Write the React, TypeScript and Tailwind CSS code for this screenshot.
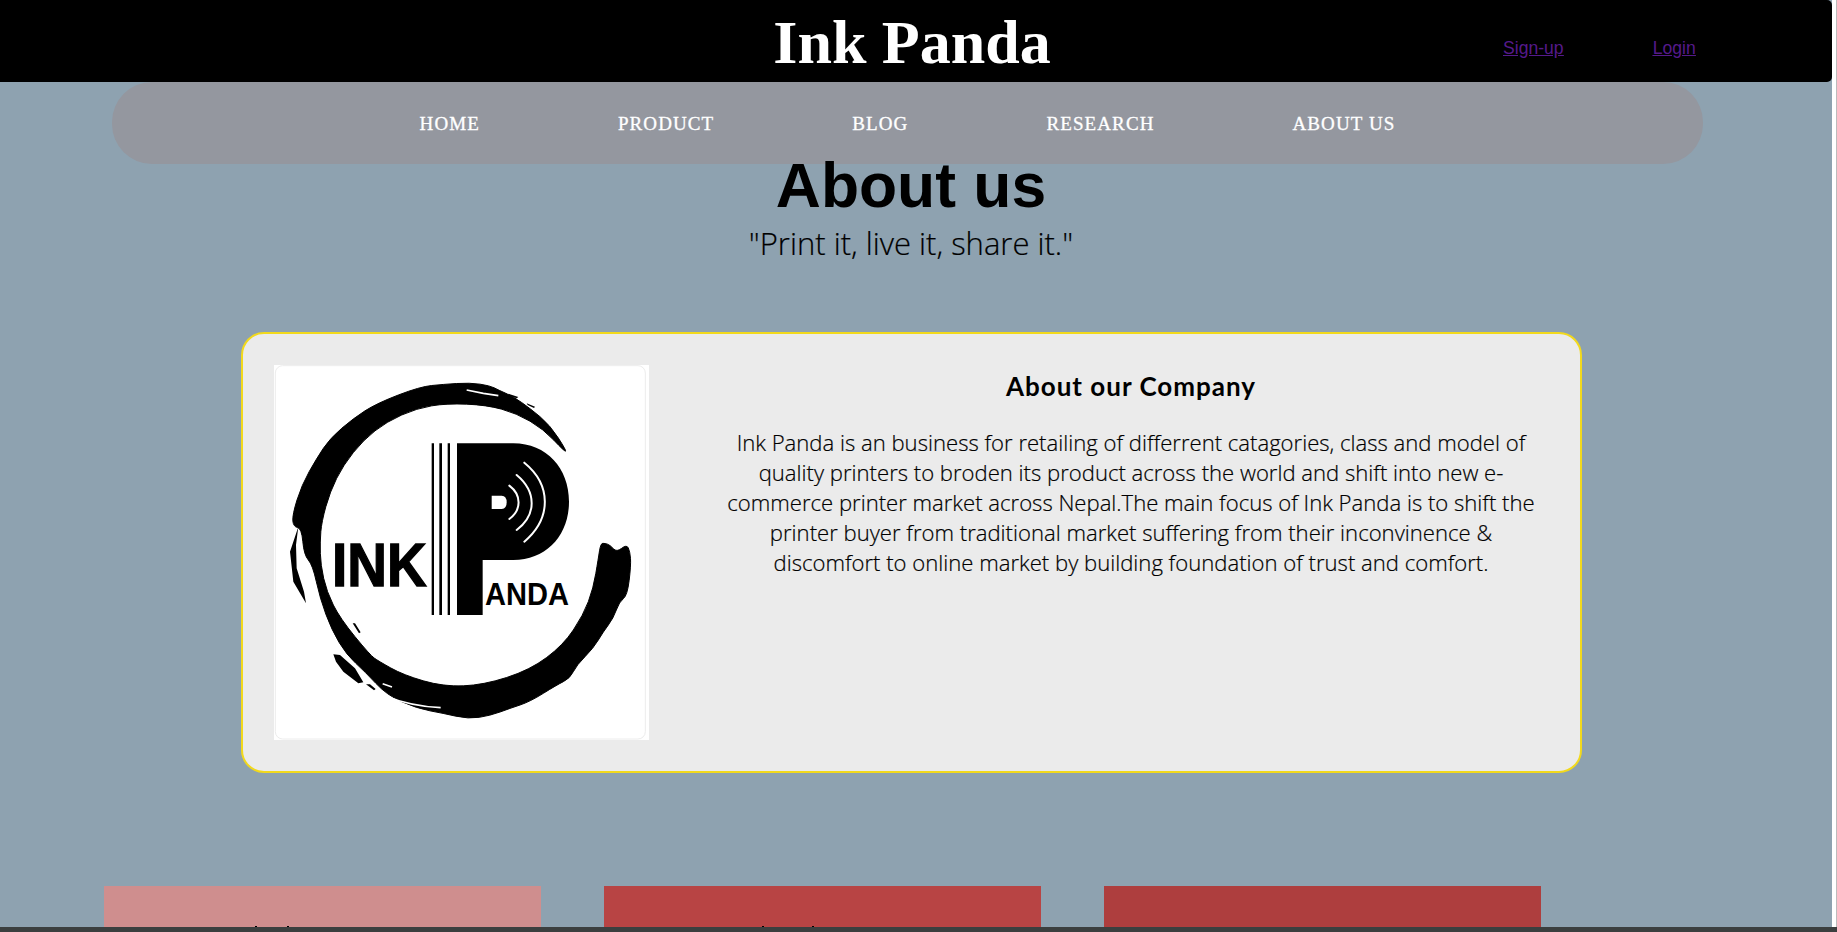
const navItems = ["HOME", "PRODUCT", "BLOG", "RESEARCH", "ABOUT US"];

// outline of the brush ring, read off the 3x crop of the logo
const ringPoints: [number, number][] = [
    [1010, 378], [1003, 379], [940, 312], [860, 265], [770, 240], [650, 235], [560, 250], [470, 290], [400, 345], [340, 420], [300, 500], [275, 590],
    [270, 650], [272, 720], [290, 800], [330, 880], [420, 990], [445, 1008], [520, 1050], [640, 1085], [760, 1080], [900, 1035], [1000, 960], [1060, 870],
    [1090, 790], [1105, 700], [1112, 655], [1125, 655], [1140, 660], [1160, 682], [1190, 658], [1200, 680], [1203, 720], [1192, 812], [1168, 830], [1150, 880], [1120, 920],
    [1090, 970], [1040, 1020], [1020, 1060], [980, 1080], [900, 1130], [840, 1150], [780, 1172], [715, 1182], [640, 1165], [560, 1150], [470, 1110], [405, 1040],
    [350, 990], [305, 915], [270, 820], [248, 720], [222, 690], [215, 610], [190, 605], [187, 570], [215, 480], [260, 400], [300, 340], [370, 280], [440, 235],
    [570, 185], [640, 178], [720, 173], [780, 182], [805, 195], [850, 215], [900, 250], [960, 300],
];

function smoothPath(points: [number, number][]): string {
    const last = points[points.length - 1];
    let d = `M${(last[0] + points[0][0]) / 2} ${(last[1] + points[0][1]) / 2}`;
    points.forEach((point, index) => {
        const next = points[(index + 1) % points.length];
        d += ` Q${point[0]} ${point[1]} ${(point[0] + next[0]) / 2} ${(point[1] + next[1]) / 2}`;
    });
    return d + " Z";
}

function Logo() {
    return (
        <svg viewBox="132 120 1125 1125" className="block w-[375px] h-[375px]">
            <rect x="132" y="120" width="1125" height="1125" fill="#ffffff" />
            <rect x="136" y="122" width="1110" height="1120" rx="22" fill="none" stroke="#ececec" strokeWidth="3" />
            <path fill="#000" stroke="#000" strokeWidth="3" d={smoothPath(ringPoints)} />
            {/* stray brush flecks */}
            <path fill="#000" d="M205 605 L180 680 L190 770 L228 835 L222 800 L200 730 L198 660 Z" />
            <path fill="#000" d="M835 206 L865 216 L860 220 L838 212 Z M890 235 L915 245 L912 249 L893 240 Z" />
            <path fill="#000" d="M368 895 L375 895 L392 922 L387 925 Z M310 988 L330 990 L375 1030 L400 1072 L385 1075 L340 1040 L318 1010 Z M408 1078 L420 1078 L437 1092 L432 1096 Z" />
            <path fill="none" stroke="#fff" strokeWidth="5" d="M710 195 L760 205 L805 212 M465 1112 C520 1135 580 1145 632 1148 M458 1076 L486 1086" />
            {/* P mark */}
            <path fill="#000" d="M605 355 H612 V870 H605 Z M628 355 H636 V870 H628 Z M653 355 H660 V870 H653 Z" />
            <path fill="#000" d="M681 355 H850 C950 355 1017 430 1017 530 C1017 630 950 705 850 705 H758 V870 H681 Z" />
            <path fill="#fff" d="M785 512 H815 Q830 512 830 532 Q830 552 815 552 H785 Z" />
            <path fill="none" stroke="#fff" strokeWidth="6" strokeLinecap="round" d="M838 482 C875 510 875 555 838 582 M860 450 C920 500 920 570 860 615 M883 413 C965 480 965 580 883 650" />
            <text x="306" y="784" fontFamily="'Liberation Sans', sans-serif" fontWeight="700" fontSize="185" textLength="284" lengthAdjust="spacingAndGlyphs" fill="#000" stroke="#000" strokeWidth="4">INK</text>
            <text x="765" y="839" fontFamily="'Liberation Sans', sans-serif" fontWeight="700" fontSize="93" textLength="252" lengthAdjust="spacingAndGlyphs" fill="#000">ANDA</text>
        </svg>
    );
}

export default function App() {
    return (
        <div className="h-[932px] overflow-hidden bg-[#8ea2b0] relative font-['Liberation_Sans',sans-serif]">
            <header className="h-[82px] mr-[5px] bg-black rounded-r-[5px] relative">
                <h1 className="pr-[8px] pt-[1px] text-center text-[62px] leading-[82px] font-bold text-white font-['Liberation_Serif',serif]">Ink Panda</h1>
                <div className="absolute left-[1503px] top-[38px] flex gap-[89px] text-[17.6px] leading-[20px] text-[#551a8b] underline">
                    <a href="#">Sign-up</a>
                    <a href="#">Login</a>
                </div>
            </header>

            <nav className="ml-[112px] w-[1591px] h-[82px] rounded-[40px] bg-[#94979f] flex items-center justify-center gap-[138px] pt-[2px] font-['Liberation_Serif',serif] text-[19px] tracking-[1.1px] [-webkit-text-stroke:0.3px_white] text-white">
                {navItems.map((item) => (
                    <span key={item}>{item}</span>
                ))}
            </nav>

            <section className="pr-[15px] text-center">
                <h2 className="text-[62.4px] leading-[73px] font-bold text-black -mt-[15px]">About us</h2>
                <p className="text-[31px] leading-[40px] text-black font-['Open_Sans',sans-serif] font-light pt-[1px] h-[40px] [-webkit-text-stroke:0.2px_black]">"Print it, live it, share it."</p>
            </section>

            <div className="ml-[241px] mt-[70px] w-[1341px] h-[441px] border-2 border-[#f2d91c] rounded-[23px] bg-[#ebebeb] flex pl-[31px] pt-[31px]">
                <div className="w-[375px] shrink-0">
                    <Logo />
                </div>
                <div className="ml-[72px] w-[820px] text-center text-black">
                    <h3 className="text-[26px] leading-[30px] font-bold tracking-[1px] font-['Lato',sans-serif] mt-[6px]">About our Company</h3>
                    <p className="mt-[26px] text-[22.1px] leading-[30px] font-['Open_Sans',sans-serif] font-light [-webkit-text-stroke:0.2px_black]">
                        Ink Panda is an business for retailing of differrent catagories, class and model of quality printers to broden its product across the world and shift into new e-commerce printer market across Nepal.The main focus of Ink Panda is to shift the printer buyer from traditional market suffering from their inconvinence &amp; discomfort to online market by building foundation of trust and comfort.
                    </p>
                </div>
            </div>

            <div className="ml-[104px] mt-[113px] flex gap-[63px]">
                <div className="relative w-[437px] h-[41px] bg-[#cf8e8e]">
                    <span className="absolute left-[151px] bottom-0 w-[2px] h-[1px] bg-black" />
                    <span className="absolute left-[183px] bottom-0 w-[2px] h-[1px] bg-black" />
                </div>
                <div className="relative w-[437px] h-[41px] bg-[#b84444]">
                    <span className="absolute left-[158px] bottom-0 w-[2px] h-[1px] bg-black" />
                    <span className="absolute left-[208px] bottom-0 w-[2px] h-[1px] bg-black" />
                </div>
                <div className="w-[437px] h-[41px] bg-[#ae3e3e]" />
            </div>

            <div className="absolute left-0 right-0 bottom-0 h-[5px] bg-[#3b3f3f]" />
            <div className="absolute right-0 top-0 bottom-[5px] w-[5px] bg-white border-r border-[#bcbcbc]" />
        </div>
    );
}
